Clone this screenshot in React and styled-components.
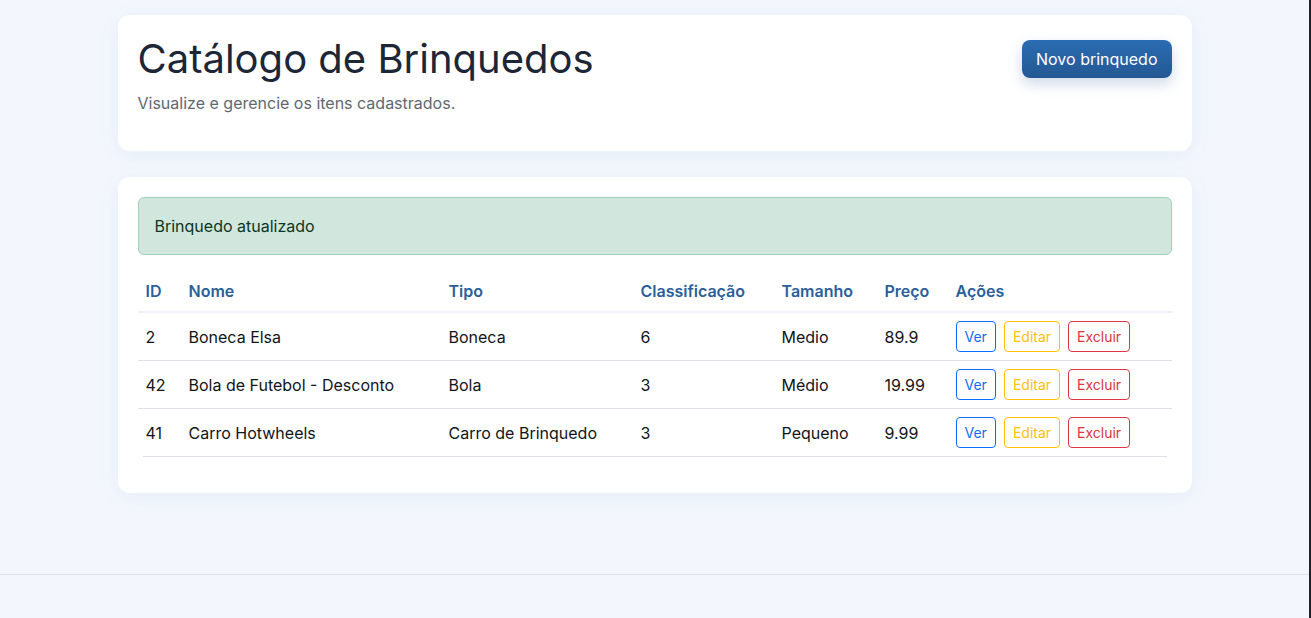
import React from "react";
import styled, { createGlobalStyle } from "styled-components";

const GlobalStyle = createGlobalStyle`
  html, body {
    margin: 0;
    padding: 0;
    background: #f3f7fd;
  }
  body {
    font-family: Inter, "Noto Sans", "Liberation Sans", sans-serif;
    font-size: 16px;
    line-height: 1.5;
    color: #212529;
  }
  * { box-sizing: border-box; }
`;

const Page = styled.div`
  min-height: 100vh;
  display: flex;
  flex-direction: column;
  border-right: 2px solid #1d222b;
`;

const Main = styled.main`
  width: 1074px;
  margin: 0 auto;
  padding: 15px 0 81px;
  display: flex;
  flex-direction: column;
  gap: 26px;
`;

const Card = styled.section`
  background: #fff;
  border-radius: 12px;
  padding: 20px;
  box-shadow: 0 4px 22px rgba(40, 80, 150, 0.06);
`;

const HeaderRow = styled.div`
  display: flex;
  align-items: center;
  justify-content: space-between;
  margin-bottom: 8px;
`;

const Title = styled.h1`
  margin: 0;
  font-size: 40px;
  font-weight: 400;
  line-height: 1.2;
  color: #1c2636;
`;

const Subtitle = styled.p`
  margin: 0 0 16px;
  color: #5f6770;
`;

const PrimaryButton = styled.button`
  height: 38px;
  padding: 0 14px;
  border: none;
  border-radius: 8px;
  background: linear-gradient(180deg, #2b6cb2 0%, #245893 100%);
  color: #fff;
  font-family: inherit;
  font-size: 16px;
  font-weight: 400;
  box-shadow: 0 6px 14px rgba(36, 88, 147, 0.22);
  cursor: pointer;
`;

const Alert = styled.div`
  background: #d1e7dd;
  border: 1px solid #a3cfbb;
  border-radius: 6px;
  padding: 16px;
  color: #0a3622;
  margin-bottom: 16px;
`;

const Table = styled.table`
  width: 100%;
  border-collapse: collapse;
  table-layout: fixed;
`;

const Col = styled.col`
  width: ${(p) => p.$w}px;
`;

const Th = styled.th`
  text-align: left;
  padding: 8px;
  font-weight: 600;
  color: #2a5f9c;
  border-bottom: 2px solid #eef2f8;
`;

const Tr = styled.tr`
  &:not(:last-child) td {
    border-bottom: 1px solid #dee2e6;
  }
`;

const Td = styled.td`
  padding: 8px;
  vertical-align: middle;
  color: #111418;
`;

const TableEnd = styled.div`
  margin: 0 5px 16px;
  border-top: 1px solid #dee2e6;
`;

const Actions = styled.div`
  display: flex;
  gap: 8px;
`;

const tones = {
  blue: "#0d6efd",
  yellow: "#ffc107",
  red: "#dc3545",
};

const SmallButton = styled.button`
  height: 31px;
  padding: 0 8px;
  background: #fff;
  border: 1px solid ${(p) => tones[p.$tone]};
  color: ${(p) => tones[p.$tone]};
  border-radius: 4px;
  font-family: inherit;
  font-size: 14px;
  cursor: pointer;
`;

const Footer = styled.footer`
  border-top: 1px solid #dee2e6;
  height: 60px;
  flex: 1;
`;

const toys = [
  { id: 2, nome: "Boneca Elsa", tipo: "Boneca", classe: 6, tamanho: "Medio", preco: "89.9" },
  { id: 42, nome: "Bola de Futebol - Desconto", tipo: "Bola", classe: 3, tamanho: "Médio", preco: "19.99" },
  { id: 41, nome: "Carro Hotwheels", tipo: "Carro de Brinquedo", classe: 3, tamanho: "Pequeno", preco: "9.99" },
];

const widths = [43, 260, 192, 141, 103, 71, 224];
const headers = ["ID", "Nome", "Tipo", "Classificação", "Tamanho", "Preço", "Ações"];

export default function App() {
  return (
    <Page>
      <GlobalStyle />
      <Main>
        <Card>
          <HeaderRow>
            <Title>Catálogo de Brinquedos</Title>
            <PrimaryButton>Novo brinquedo</PrimaryButton>
          </HeaderRow>
          <Subtitle>Visualize e gerencie os itens cadastrados.</Subtitle>
        </Card>

        <Card>
          <Alert>Brinquedo atualizado</Alert>
          <Table>
            <colgroup>
              {widths.map((w, i) => (
                <Col key={i} $w={w} />
              ))}
            </colgroup>
            <thead>
              <tr>
                {headers.map((h) => (
                  <Th key={h}>{h}</Th>
                ))}
              </tr>
            </thead>
            <tbody>
              {toys.map((t) => (
                <Tr key={t.id}>
                  <Td>{t.id}</Td>
                  <Td>{t.nome}</Td>
                  <Td>{t.tipo}</Td>
                  <Td>{t.classe}</Td>
                  <Td>{t.tamanho}</Td>
                  <Td>{t.preco}</Td>
                  <Td>
                    <Actions>
                      <SmallButton $tone="blue">Ver</SmallButton>
                      <SmallButton $tone="yellow">Editar</SmallButton>
                      <SmallButton $tone="red">Excluir</SmallButton>
                    </Actions>
                  </Td>
                </Tr>
              ))}
            </tbody>
          </Table>
          <TableEnd />
        </Card>
      </Main>
      <Footer />
    </Page>
  );
}
